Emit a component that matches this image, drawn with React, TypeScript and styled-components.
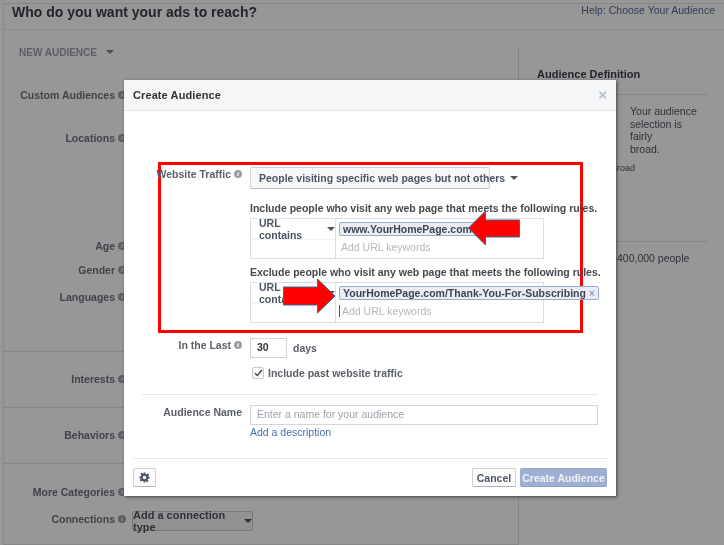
import React from "react";
import styled, { createGlobalStyle } from "styled-components";

const Global = createGlobalStyle`
  html, body { margin: 0; padding: 0; background: #979797; }
  body { font-family: "Liberation Sans", Arial, sans-serif; font-size: 11px; color: #4e5665; }
  * { box-sizing: border-box; }
`;

const Page = styled.div`
  position: relative;
  width: 724px;
  height: 545px;
  overflow: hidden;
  background: #979797;
  filter: blur(0.3px);
`;
const Frame = styled.div`
  margin: 3px 0 0 3px;
  height: 542px;
  border-top: 1px solid #858585;
  border-left: 1px solid #8a8a8a;
  display: flex;
  flex-direction: column;
`;
const TopBar = styled.div`
  height: 26px;
  flex: none;
  border-bottom: 1px solid #8a8a8a;
  display: flex;
  justify-content: space-between;
  padding: 0 9px 0 8px;
`;
const Heading = styled.h1`
  margin: 0;
  font-size: 14px;
  line-height: 17px;
  font-weight: bold;
  color: #22252b;
`;
const Help = styled.span`
  font-size: 10.5px;
  line-height: 12px;
  color: #333c58;
  padding-top: 0;
`;
const Columns = styled.div`
  flex: 1;
  display: flex;
  min-height: 0;
`;
const LeftCol = styled.div`
  width: 514px;
  flex: none;
  display: flex;
  flex-direction: column;
  padding-top: 15px;
`;
const AudienceToggle = styled.div`
  margin-left: 15px;
  height: 14px;
  display: flex;
  align-items: center;
  gap: 9px;
  font-size: 10px;
  font-weight: bold;
  color: #5b5e66;
`;
const Section = styled.section<{ $h: number; $pad: number }>`
  height: ${(p) => p.$h}px;
  flex: none;
  padding-top: ${(p) => p.$pad}px;
  border-bottom: 1px solid #868686;
`;
const BgRow = styled.div<{ $h: number }>`
  height: ${(p) => p.$h}px;
  display: flex;
  align-items: flex-start;
`;
const BgLabel = styled.div`
  width: 122px;
  height: 14px;
  flex: none;
  display: flex;
  justify-content: flex-end;
  align-items: center;
  gap: 3px;
  font-size: 10.5px;
  font-weight: bold;
  color: #40434b;
`;
const BgField = styled.div`
  margin: -20px 0 0 6px;
  width: 353px;
  height: 27px;
  border: 1px solid #70768a;
  background: #979797;
`;
const BgButton = styled.div`
  margin: -1px 0 0 6px;
  height: 20px;
  width: 121px;
  border: 1px solid #797979;
  border-radius: 2px;
  background: #929292;
  display: flex;
  align-items: center;
  justify-content: center;
  gap: 5px;
  font-size: 11px;
  font-weight: bold;
  color: #2e3138;
`;
const RightCol = styled.aside`
  flex: 1;
  margin-top: 18px;
  border-left: 1px solid #868686;
  padding: 19px 17px 0 18px;
`;
const DefinitionTitle = styled.h2`
  margin: 0;
  font-size: 11px;
  line-height: 14px;
  font-weight: bold;
  color: #22252b;
  padding-bottom: 13px;
  border-bottom: 1px solid #868686;
`;
const Broadness = styled.div`
  height: 147px;
  padding: 10px 0 0 93px;
  line-height: 12.5px;
  font-size: 10.5px;
  color: #2e3138;
  border-bottom: 1px solid #868686;
`;
const BroadWord = styled.div`
  margin: 7px 0 0 -93px;
  font-size: 9px;
  color: #2e3138;
`;
const Reach = styled.div`
  margin-top: 9px;
  font-size: 10.5px;
  line-height: 14px;
  font-weight: normal;
  color: #2e3138;
  white-space: nowrap;
`;

const Modal = styled.div`
  position: absolute;
  left: 124px;
  top: 80px;
  width: 492px;
  height: 416px;
  background: #fff;
  box-shadow: 1px 1px 3px rgba(40, 40, 40, 0.75);
  display: flex;
  flex-direction: column;
`;
const ModalHeader = styled.header`
  height: 31px;
  flex: none;
  background: #f5f6f7;
  border-bottom: 1px solid #e5e5e5;
  padding: 0 9px;
  display: flex;
  align-items: center;
  justify-content: space-between;
`;
const ModalTitle = styled.h3`
  margin: 0;
  font-size: 11px;
  font-weight: bold;
  color: #333;
  letter-spacing: 0.1px;
`;
const Close = styled.span`
  font-size: 15px;
  font-weight: bold;
  line-height: 14px;
  color: #b9bdc5;
`;
const Highlight = styled.div`
  position: relative;
  margin: 51px 0 0 34px;
  width: 425px;
  height: 171px;
  border: 3px solid #f00;
  padding: 2px 0 0 4px;
`;
const FormRow = styled.div<{ $label: number }>`
  display: grid;
  grid-template-columns: ${(p) => p.$label}px 1fr;
  column-gap: 8px;
  align-items: start;
`;
const FormLabel = styled.div`
  display: flex;
  justify-content: flex-end;
  align-items: center;
  gap: 3px;
  height: 14px;
  font-size: 10.5px;
  font-weight: bold;
  color: #5b5f68;
  white-space: nowrap;
`;
const Select = styled.div`
  width: 240px;
  height: 22px;
  border: 1px solid #cfd1d5;
  border-bottom-color: #b8bbc0;
  border-radius: 2px;
  background: #f6f7f8;
  display: flex;
  align-items: center;
  gap: 5px;
  padding-left: 8px;
  font-size: 10.5px;
  font-weight: bold;
  color: #4e5665;
  white-space: nowrap;
`;
const RuleText = styled.div<{ $top: number }>`
  margin-top: ${(p) => p.$top}px;
  height: 14px;
  line-height: 14px;
  font-size: 10.5px;
  font-weight: bold;
  color: #444950;
  white-space: nowrap;
`;
const RuleTable = styled.div`
  margin-top: 3px;
  width: 294px;
  height: 41px;
  border: 1px solid #dcdee3;
  display: grid;
  grid-template-columns: 85px 1fr;
`;
const RuleKind = styled.div`
  border-right: 1px solid #dcdee3;
`;
const RuleKindTop = styled.div`
  height: 21px;
  border-bottom: 1px solid #f0f1f3;
  padding-left: 8px;
  display: flex;
  align-items: center;
  gap: 4px;
  font-size: 10.5px;
  font-weight: bold;
  color: #4e5665;
`;
const RuleValues = styled.div`
  padding: 3px 0 0 3px;
  min-width: 0;
`;
const Chip = styled.span`
  display: inline-flex;
  align-items: center;
  gap: 3px;
  height: 14px;
  padding: 0 3px;
  border: 1px solid #9aa9ce;
  border-radius: 2px;
  background: #e9edf5;
  font-size: 10.5px;
  font-weight: bold;
  color: #3f4550;
  white-space: nowrap;
`;
const ChipX = styled.span`
  font-size: 10px;
  font-weight: bold;
  color: #8f9cbc;
`;
const Keyword = styled.div<{ $caret?: boolean }>`
  margin-top: 5px;
  height: 12px;
  line-height: 12px;
  padding-left: 2px;
  font-size: 10.5px;
  color: #b4b7bd;
  ${(p) => (p.$caret ? "border-left: 1px solid #555;" : "")}
`;
const Arrow = styled.svg<{ $x: number; $y: number }>`
  position: absolute;
  left: ${(p) => p.$x}px;
  top: ${(p) => p.$y}px;
`;
const LowerForm = styled.div`
  margin: 5px 0 0 18px;
  padding-right: 18px;
`;
const Days = styled.div`
  display: flex;
  align-items: center;
  gap: 6px;
  font-size: 10.5px;
  font-weight: bold;
  color: #5b5f68;
`;
const DaysInput = styled.div`
  width: 37px;
  height: 20px;
  border: 1px solid #cfd3da;
  padding-left: 6px;
  line-height: 17px;
  font-size: 10.5px;
  color: #333;
`;
const CheckLine = styled.div`
  margin-top: 8px;
  display: flex;
  align-items: center;
  gap: 4px;
  height: 13px;
  font-size: 10.5px;
  font-weight: bold;
  color: #5b5f68;
  padding-left: 2px;
`;
const CheckBox = styled.span`
  width: 12px;
  height: 12px;
  border: 1px solid #c8ccd2;
  border-radius: 2px;
  background: #fafafa;
  display: flex;
  align-items: center;
  justify-content: center;
`;
const Rule = styled.hr`
  margin: 15px 0 10px;
  border: 0;
  border-top: 1px solid #e5e6e9;
`;
const TextInput = styled.div`
  height: 20px;
  width: 348px;
  border: 1px solid #d3d6db;
  padding-left: 6px;
  line-height: 17px;
  font-size: 10.5px;
  color: #9da1a9;
`;
const AddLink = styled.a`
  display: block;
  margin-top: 1px;
  height: 12px;
  line-height: 12px;
  font-size: 10.5px;
  color: #4a6ea9;
`;
const ModalFooter = styled.footer`
  margin: auto 9px 0;
  height: 38px;
  flex: none;
  border-top: 1px solid #e5e6e9;
  padding-top: 9px;
  display: flex;
  align-items: flex-start;
  gap: 4px;
`;
const Button = styled.button<{ $w: number; $primary?: boolean }>`
  width: ${(p) => p.$w}px;
  height: 19px;
  padding: 0;
  border: 1px solid ${(p) => (p.$primary ? "#9aa9cc" : "#cfd0d4")};
  border-bottom-color: ${(p) => (p.$primary ? "#8f9ec2" : "#aeb0b5")};
  border-radius: 2px;
  background: ${(p) => (p.$primary ? "#9fafd1" : "#fbfbfc")};
  color: ${(p) => (p.$primary ? "#eef1f7" : "#4e5665")};
  font: bold 10.5px "Liberation Sans", Arial, sans-serif;
  display: flex;
  align-items: center;
  justify-content: center;
`;
const Spacer = styled.div`
  flex: 1;
`;
const InfoDot = styled.span<{ $c: string; $fg: string }>`
  width: 8px;
  height: 8px;
  flex: none;
  border-radius: 50%;
  background: ${(p) => p.$c};
  color: ${(p) => p.$fg};
  font: italic bold 7px/8px "Liberation Serif", serif;
  text-align: center;
`;
const Caret = ({ c }: { c: string }) => (
  <svg width="8" height="4" viewBox="0 0 8 4" style={{ flex: "none" }}>
    <path d="M0 0h8L4 4z" fill={c} />
  </svg>
);
const PageInfo = () => <InfoDot $c="#5b5e64" $fg="#979797">i</InfoDot>;
const ModalInfo = () => <InfoDot $c="#9a9ea6" $fg="#fff">i</InfoDot>;

const arrowStroke = "#2f6d98";

export default function App() {
  return (
    <>
      <Global />
      <Page>
        <Frame>
          <TopBar>
            <Heading>Who do you want your ads to reach?</Heading>
            <Help>Help: Choose Your Audience</Help>
          </TopBar>
          <Columns>
            <LeftCol>
              <AudienceToggle>
                NEW AUDIENCE <Caret c="#4c4f55" />
              </AudienceToggle>
              <Section $h={293} $pad={29}>
                <BgRow $h={43}><BgLabel>Custom Audiences <PageInfo /></BgLabel></BgRow>
                <BgRow $h={108}><BgLabel>Locations <PageInfo /></BgLabel></BgRow>
                <BgRow $h={24}><BgLabel>Age <PageInfo /></BgLabel></BgRow>
                <BgRow $h={27}><BgLabel>Gender <PageInfo /></BgLabel></BgRow>
                <BgRow $h={50}><BgLabel>Languages <PageInfo /></BgLabel></BgRow>
              </Section>
              <Section $h={56} $pad={20}>
                <BgRow $h={14}><BgLabel>Interests <PageInfo /></BgLabel></BgRow>
              </Section>
              <Section $h={56} $pad={20}>
                <BgRow $h={14}><BgLabel>Behaviors <PageInfo /></BgLabel></BgRow>
              </Section>
              <Section $h={81} $pad={21}>
                <BgRow $h={27}>
                  <BgLabel>More Categories <PageInfo /></BgLabel>
                  <BgField />
                </BgRow>
                <BgRow $h={20}>
                  <BgLabel>Connections <PageInfo /></BgLabel>
                  <BgButton>Add a connection type <Caret c="#2e3138" /></BgButton>
                </BgRow>
              </Section>
            </LeftCol>
            <RightCol>
              <DefinitionTitle>Audience Definition</DefinitionTitle>
              <Broadness>
                Your audience<br />selection is fairly<br />broad.
                <BroadWord>Specific &nbsp; &nbsp; &nbsp; &nbsp; &nbsp; &nbsp; &nbsp; &nbsp; Broad</BroadWord>
              </Broadness>
              <Reach>Potential Reach: 400,000 people</Reach>
            </RightCol>
          </Columns>
        </Frame>

        <Modal>
          <ModalHeader>
            <ModalTitle>Create Audience</ModalTitle>
            <Close>×</Close>
          </ModalHeader>
          <Highlight>
            <FormRow $label={77}>
              <FormLabel>Website Traffic <ModalInfo /></FormLabel>
              <div>
                <Select>People visiting specific web pages but not others <Caret c="#4e5665" /></Select>
                <RuleText $top={12}>Include people who visit any web page that meets the following rules.</RuleText>
                <RuleTable>
                  <RuleKind><RuleKindTop>URL contains <Caret c="#4e5665" /></RuleKindTop></RuleKind>
                  <RuleValues>
                    <Chip>www.YourHomePage.com <ChipX>×</ChipX></Chip>
                    <Keyword>Add URL keywords</Keyword>
                  </RuleValues>
                </RuleTable>
                <RuleText $top={6}>Exclude people who visit any web page that meets the following rules.</RuleText>
                <RuleTable>
                  <RuleKind><RuleKindTop>URL contains <Caret c="#4e5665" /></RuleKindTop></RuleKind>
                  <RuleValues>
                    <Chip>YourHomePage.com/Thank-You-For-Subscribing <ChipX>×</ChipX></Chip>
                    <Keyword $caret>Add URL keywords</Keyword>
                  </RuleValues>
                </RuleTable>
              </div>
            </FormRow>
            <Arrow $x={306} $y={45} width="55" height="38" viewBox="0 0 55 38">
              <path d="M1.5 18 L18.5 1 V10 H52.5 V27 H18.5 V35 Z" fill="#f00" stroke={arrowStroke} strokeWidth="1" />
            </Arrow>
            <Arrow $x={121} $y={113} width="56" height="38" viewBox="0 0 56 38">
              <path d="M1.5 9 H35.5 V1 L53 18 L35.5 35 V27 H1.5 Z" fill="#f00" stroke={arrowStroke} strokeWidth="1" />
            </Arrow>
          </Highlight>
          <LowerForm>
            <FormRow $label={100}>
              <FormLabel>In the Last <ModalInfo /></FormLabel>
              <Days><DaysInput>30</DaysInput>days</Days>
            </FormRow>
            <FormRow $label={100}>
              <span />
              <CheckLine>
                <CheckBox>
                  <svg width="9" height="8" viewBox="0 0 9 8"><path d="M1 4.2 3.4 6.5 8 1" fill="none" stroke="#444" strokeWidth="1.4" /></svg>
                </CheckBox>
                Include past website traffic
              </CheckLine>
            </FormRow>
            <Rule />
            <FormRow $label={100}>
              <FormLabel>Audience Name</FormLabel>
              <div>
                <TextInput>Enter a name for your audience</TextInput>
                <AddLink>Add a description</AddLink>
              </div>
            </FormRow>
          </LowerForm>
          <ModalFooter>
            <Button $w={23} aria-label="Settings">
              <svg width="11" height="11" viewBox="0 0 24 24">
                <path fill="#4e5665" fillRule="evenodd" d="M10 1h4l.7 3.2 1.9.8 2.8-1.8 2.8 2.8-1.8 2.8.8 1.9L23 10v4l-3.2.7-.8 1.9 1.8 2.8-2.8 2.8-2.8-1.8-1.9.8L14 23h-4l-.7-3.2-1.9-.8-2.8 1.8-2.8-2.8 1.8-2.8-.8-1.9L1 14v-4l3.2-.7.8-1.9-1.8-2.8 2.8-2.8 2.8 1.8 1.9-.8zM12 8a4 4 0 1 0 0 8 4 4 0 0 0 0-8z" />
              </svg>
            </Button>
            <Spacer />
            <Button $w={44}>Cancel</Button>
            <Button $w={87} $primary>Create Audience</Button>
          </ModalFooter>
        </Modal>
      </Page>
    </>
  );
}
